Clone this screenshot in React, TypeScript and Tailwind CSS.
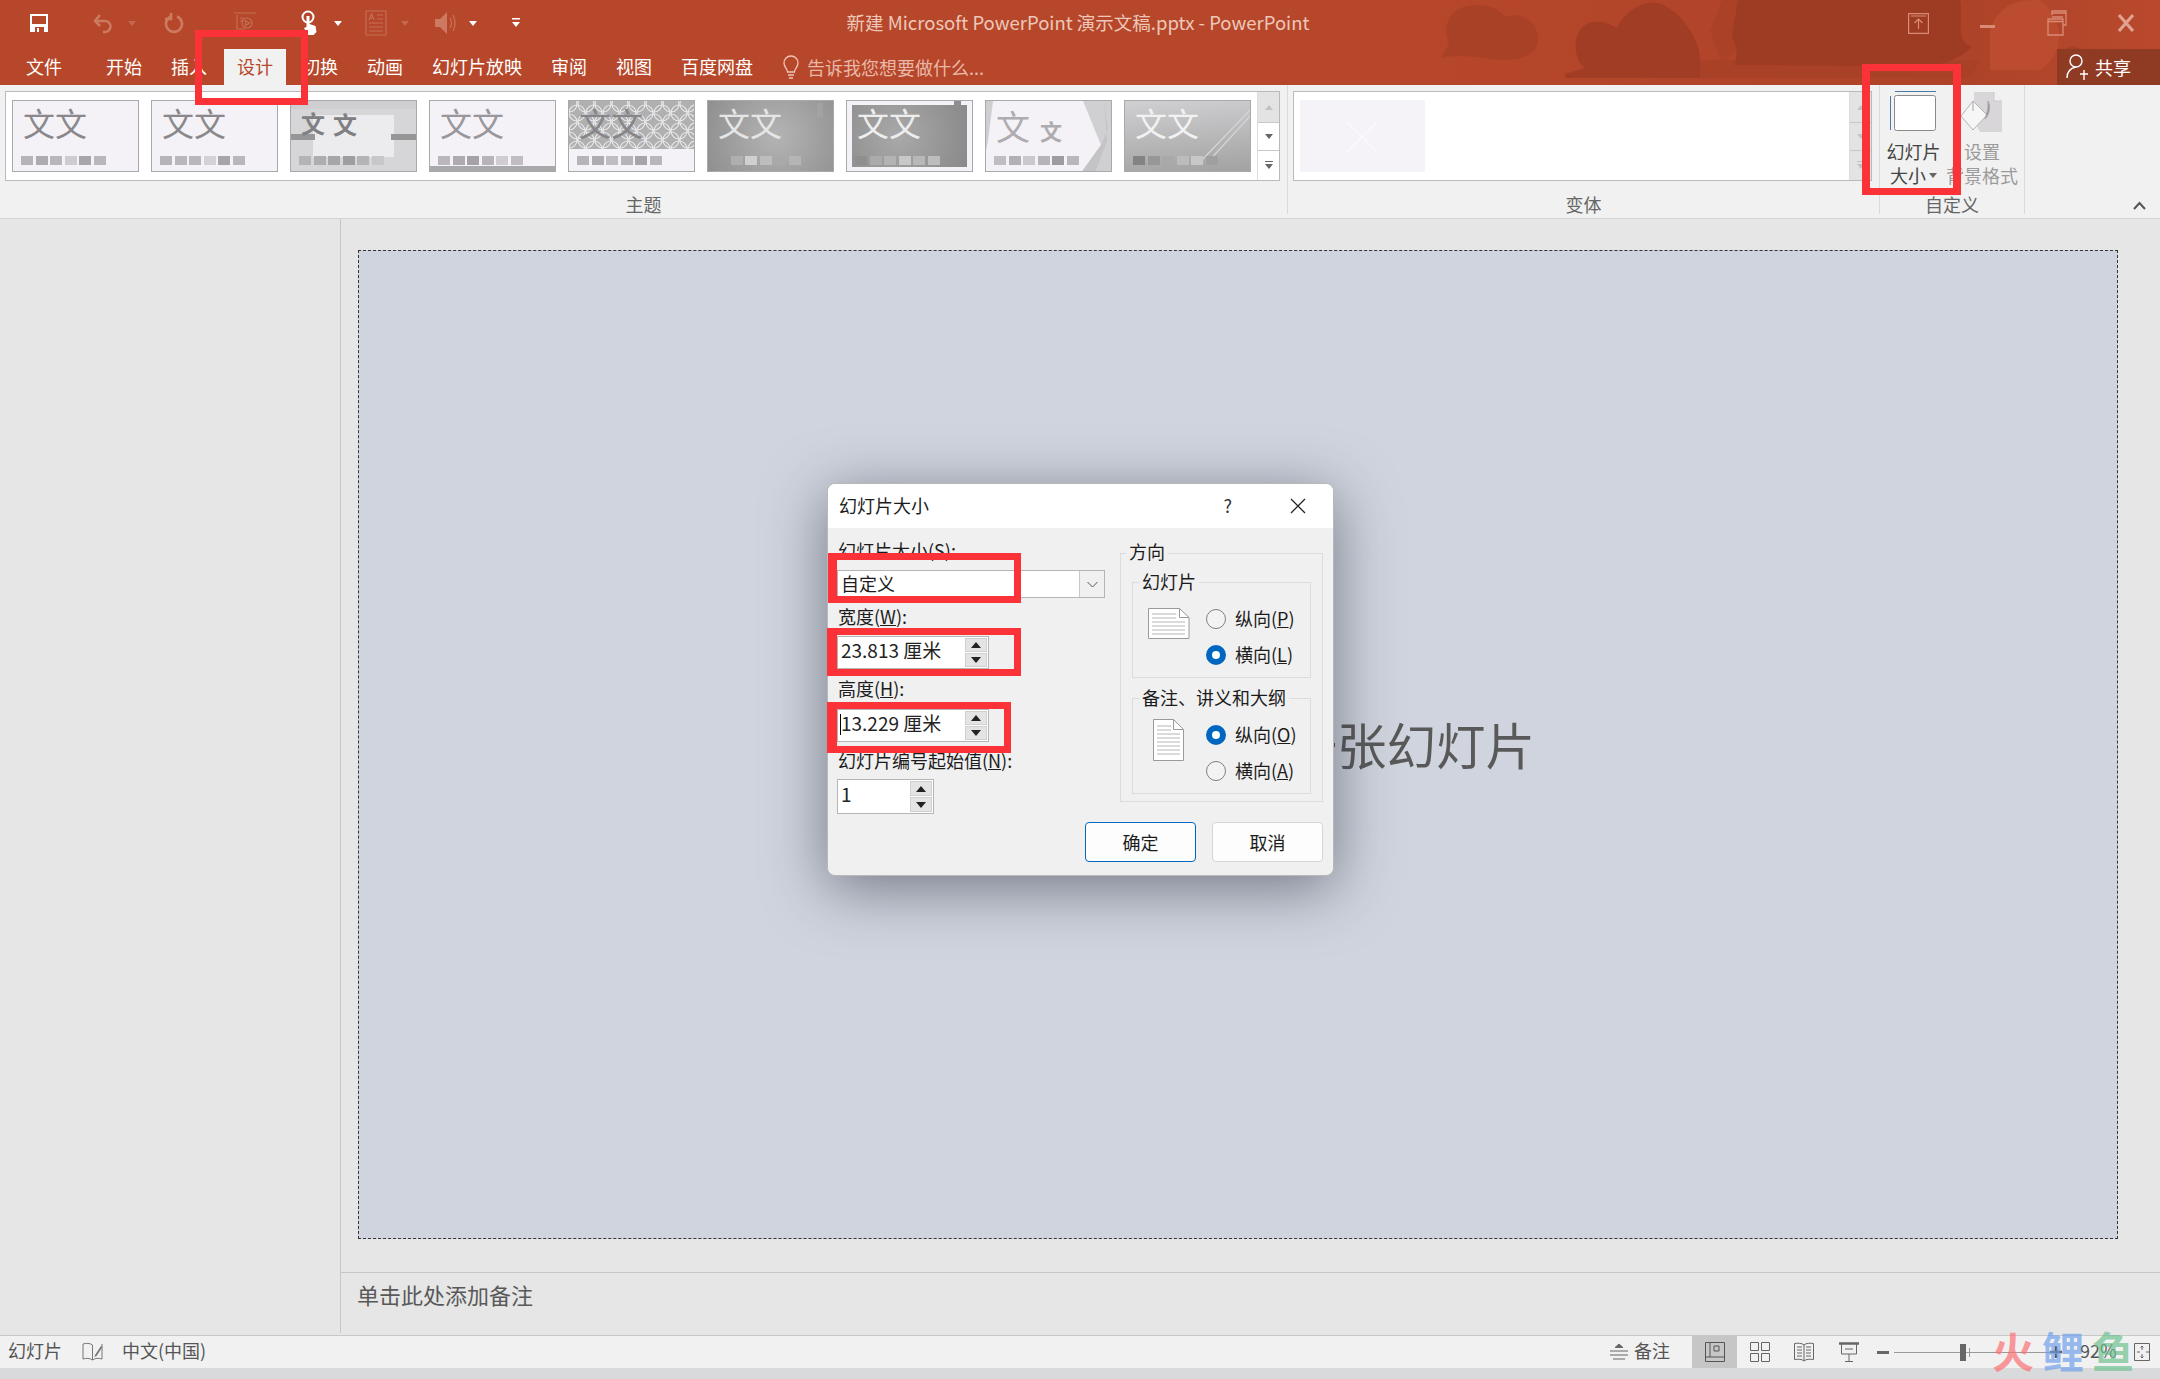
import React from "react";

const Caret = ({ c = "#f4d9d0" }: { c?: string }) => (
  <svg width="8" height="5" viewBox="0 0 8 5"><path d="M0 0h8L4 5z" fill={c} /></svg>
);

const QuickBar = () => (
  <div className="flex items-center w-[640px] shrink-0 pl-[29px]">
    <svg width="20" height="20" viewBox="0 0 20 20" className="shrink-0">
      <path d="M1 1h18v18H1z" fill="#fff" />
      <path d="M3 3h14v8H3z" fill="#b7472a" />
      <path d="M6 14h9v5H6z" fill="#b7472a" />
      <path d="M8 15h2v4H8z" fill="#fff" />
    </svg>
    <svg width="22" height="22" viewBox="0 0 22 22" className="ml-[43px] shrink-0" fill="none" stroke="#cc7a62" strokeWidth="2.6">
      <path d="M3 9h10a5.500 5.500 0 0 1 0 11h-2M8 3 3 9l5 5" />
    </svg>
    <div className="ml-[14px]"><Caret c="#c4694f" /></div>
    <svg width="20" height="22" viewBox="0 0 20 22" className="ml-[28px] shrink-0" fill="none" stroke="#cc7a62" strokeWidth="2.6">
      <path d="M7 4.500a8 8 0 1 0 6 0M7 1v6H1" />
    </svg>
    <svg width="24" height="24" viewBox="0 0 24 24" className="ml-[49px] shrink-0" fill="none" stroke="#c56e56" strokeWidth="1.200">
      <path d="M1 2h22M4 4v14h8" />
      <circle cx="14" cy="12" r="5" />
      <path d="M12.500 9.500v5l4-2.500z" />
      <path d="M7 7h4M7 10h3M12 20l2 2" />
    </svg>
    <svg width="20" height="26" viewBox="0 0 20 26" className="ml-[43px] shrink-0">
      <circle cx="8" cy="7" r="5.500" fill="none" stroke="#fff" strokeWidth="2" />
      <path d="M6.500 6h3v8l6 2 1 6-3 3H8l-4-7 2.500-1z" fill="#fff" />
    </svg>
    <div className="ml-[14px]"><Caret c="#fff" /></div>
    <svg width="22" height="26" viewBox="0 0 22 26" className="ml-[23px] shrink-0" fill="none" stroke="#c56e56" strokeWidth="1.200">
      <path d="M1 1h20v24H1zM4 13h14M4 17h14M4 21h14M4 10l2.500-6 2.500 6M5 8h3M12 5h6M12 9h6" />
    </svg>
    <div className="ml-[14px]"><Caret c="#c4694f" /></div>
    <svg width="22" height="24" viewBox="0 0 22 24" className="ml-[25px] shrink-0">
      <path d="M1 8h5l7-7v22l-7-7H1z" fill="#cc7a62" />
      <path d="M16 7q3 5 0 10M19 4q4 8 0 16" fill="none" stroke="#c56e56" strokeWidth="1.400" />
    </svg>
    <div className="ml-[13px]"><Caret c="#fff" /></div>
    <svg width="10" height="12" viewBox="0 0 10 12" className="ml-[34px] shrink-0">
      <path d="M1 1h8v1.500H1zM1 5h8L5 10z" fill="#fff" />
    </svg>
  </div>
);

const WindowControls = () => (
  <div className="flex w-[644px] shrink-0 justify-end h-full relative">
    <div className="w-[69px] flex items-center justify-center">
      <svg width="21" height="21" viewBox="0 0 21 21" fill="none" stroke="#d98b75" strokeWidth="1.200">
        <path d="M.6.600h19.800v19.800H.6z" /><path d="M3 3h15M10.500 16V6M6.500 10l4-4 4 4" />
      </svg>
    </div>
    <div className="w-[69px] flex items-center justify-center pt-[6px]"><div className="w-[15px] h-[3px] bg-[#d98b75]" /></div>
    <div className="w-[69px] flex items-center justify-center">
      <svg width="20" height="26" viewBox="0 0 20 26" fill="none" stroke="#d98b75" strokeWidth="1.300">
        <path d="M5 5V1h14v14h-3M1 9h15v16H1zM1 11.500h15M5 3h14M5 7h11" />
      </svg>
    </div>
    <div className="w-[69px] flex items-center justify-center">
      <svg width="16" height="18" viewBox="0 0 16 18" stroke="#e0a392" strokeWidth="3"><path d="M1 1l14 16M15 1 1 17" /></svg>
    </div>
  </div>
);

const tabs: [string, string][] = [
  ["开始", ""], ["插入", ""], ["设计", "active"], ["切换", ""], ["动画", ""], ["幻灯片放映", ""], ["审阅", ""], ["视图", ""], ["百度网盘", ""],
];

const TabRow = () => (
  <div className="flex h-[39px] items-end relative">
    <div className="flex items-end pl-[26px] h-full">
      <div className="h-[36px] leading-[34px] text-white mr-[44px]">文件</div>
      <div className="flex items-end">
        {tabs.map(([t, a]) =>
          a ? (
            <div key={t} className="h-[36px] leading-[34px] px-[13px] bg-[#f1f1f1] text-[#b7472a] ml-[-12px] mr-[16px]">{t}</div>
          ) : (
            <div key={t} className="h-[36px] leading-[34px] text-white mr-[29px] last:mr-0">{t}</div>
          )
        )}
      </div>
      <div className="h-[36px] leading-[34px] flex items-center ml-[29px] text-[#e8b9a9]">
        <svg width="18" height="24" viewBox="0 0 18 24" fill="none" stroke="#eec6b9" strokeWidth="1.300" className="mr-[7px]">
          <path d="M5.500 17c0-3-3.500-5-3.500-9a7 7 0 0 1 14 0c0 4-3.500 6-3.500 9zM6 20h6M7 23h4" />
        </svg>
        告诉我您想要做什么...
      </div>
    </div>
    <div className="ml-auto w-[103px] h-[36px] leading-[34px] bg-[#8f3a22] flex items-center pl-[9px] text-white">
      <svg width="22" height="30" viewBox="0 0 22 30" fill="none" stroke="#fff" strokeWidth="1.400" className="mr-[7px]">
        <circle cx="10" cy="9" r="6" /><path d="M1 26c0-7 4-10 9-11M14 22h8M18 18v10" />
      </svg>
      共享
    </div>
  </div>
);

type T = { id: number; bg: string; color: string; sw: string[] };
const thumbs: T[] = [
  { id: 1, bg: "bg-[#f4f2f6]", color: "text-[#8a888c]", sw: ["#b7b3b8", "#aeaaaf", "#bab6bb", "#cfcbd0", "#a8a4a9", "#bab6bb"] },
  { id: 2, bg: "bg-[#f4f2f6]", color: "text-[#8a888c]", sw: ["#b7b3b8", "#bab6bb", "#bab6bb", "#d5d1d6", "#a8a4a9", "#bab6bb"] },
  { id: 3, bg: "bg-[#d6d6d8]", color: "text-[#808082]", sw: ["#b5b3b6", "#aeacaf", "#a7a5a8", "#9f9da0", "#b5b3b6", "#c8c6c9"] },
  { id: 4, bg: "bg-[#f4f2f6]", color: "text-[#99979b]", sw: ["#bab6bb", "#aeaaaf", "#a5a1a6", "#b7b3b8", "#d0ccd1", "#c0bcc1"] },
  { id: 5, bg: "bg-[#f4f2f6]", color: "text-[#87858a]", sw: ["#b7b3b8", "#aeaaaf", "#c0bcc1", "#b7b3b8", "#a8a4a9", "#bab6bb"] },
  { id: 6, bg: "bg-[radial-gradient(circle_at_55%_50%,#b4b4b4,#8f8f8f)]", color: "text-[#e6e6e6]", sw: ["transparent", "#afafaf", "#d0d0d0", "#bdbdbd", "#a9a9a9", "#b5b5b5"] },
  { id: 7, bg: "bg-[#f4f2f6]", color: "text-[#eeeeee]", sw: ["#8f8f8f", "#ababab", "#b3b3b3", "#c8c8c8", "#b8b8b8", "#bdbdbd"] },
  { id: 8, bg: "bg-[#f5f2f7]", color: "text-[#aeacb0]", sw: ["#c0bcc1", "#b3afb4", "#cbc7cc", "#b7b3b8", "#9f9ba0", "#bab6bb"] },
  { id: 9, bg: "bg-[linear-gradient(175deg,#d0d0d2,#a2a2a3)]", color: "text-[#f2f2f2]", sw: ["#838383", "#979797", "#a9a9a9", "#bcbcbc", "#c8c8c8", "#a0a0a0"] },
];

const Decor = ({ id }: { id: number }) => {
  if (id === 3)
    return (
      <svg className="absolute inset-0" width="127" height="72" viewBox="0 0 127 72">
        <rect width="127" height="72" fill="#d6d6d8" />
        <path d="M22 14h81v42H22z" fill="#ececee" />
        <path d="M0 0h127v8H0z" fill="#cfcfd1" />
        <path d="M0 33h24v6H0zM100 33h27v6h-27z" fill="#969697" />
      </svg>
    );
  if (id === 4)
    return <div className="absolute left-0 right-0 bottom-0 h-[5px] bg-[#a9a9ab]" />;
  if (id === 5)
    return (
      <svg className="absolute inset-0" width="127" height="48" viewBox="0 0 127 48">
        <rect width="127" height="48" fill="#b0b0b1" />
        {Array.from({ length: 48 }).map((_, i) => (
          <circle key={i} cx={(i % 8) * 17 + (Math.floor(i / 8) % 2) * 8} cy={Math.floor(i / 8) * 9 + 3} r="8" fill="none" stroke="#e8e8ea" strokeWidth="1.200" />
        ))}
      </svg>
    );
  if (id === 6)
    return <div className="absolute right-[10px] top-[2px] w-[6px] h-[14px] bg-[#a2a2a2]" />;
  if (id === 7)
    return (
      <>
        <div className="absolute inset-x-[5px] top-[4px] bottom-[4px] bg-[radial-gradient(circle_at_40%_50%,#a9a9a9,#898989)]" />
        <div className="absolute right-[11px] top-0 w-[7px] h-[11px] bg-[#8e8e8e]" />
      </>
    );
  if (id === 8)
    return (
      <svg className="absolute inset-0" width="127" height="72" viewBox="0 0 127 72">
        <path d="M97 0h30v72H95l20-28z" fill="#d0d0d2" />
        <path d="M0 0h7L2 40 0 50z" fill="#cfcfd1" />
        <path d="M104 0h14l4 28-7 16-20 28h14l12-32-3-40z" fill="#c4c4c6" />
      </svg>
    );
  if (id === 9)
    return (
      <svg className="absolute inset-0" width="127" height="72" viewBox="0 0 127 72" fill="none" stroke="#d6d6d8" strokeWidth="1.200">
        <path d="M126 8 76 60M126 14 82 62" />
      </svg>
    );
  return null;
};

const Thumb = ({ t }: { t: T }) => (
  <div className={`relative w-[127px] h-[72px] shrink-0 overflow-hidden border border-[#a9a9ad] ${t.bg}`}>
    <Decor id={t.id} />
    {t.id === 3 || t.id === 8 ? (
      <div className={`absolute left-[10px] top-[3px] leading-[36px] ${t.color} flex items-center`}>
        <span className={`${t.id === 3 ? "text-[24px] font-bold mr-[8px]" : "text-[34px] mr-[10px]"}`}>文</span>
        <span className={`${t.id === 3 ? "text-[24px] font-bold mt-[2px]" : "text-[22px] font-bold mt-[8px]"}`}>文</span>
      </div>
    ) : (
      <div className={`absolute left-[10px] top-0 text-[32px] leading-[42px] ${t.color}`}>文文</div>
    )}
    <div className="absolute left-[8px] top-[55px] flex gap-[2.5px]">
      {t.sw.map((c, i) => (
        <div key={i} className="w-[12px] h-[9px]" style={{ backgroundColor: c }} />
      ))}
    </div>
  </div>
);

const ScrollCol = ({ faded }: { faded?: boolean }) => (
  <div className="w-[22px] flex flex-col border-l border-[#dcdcdc] shrink-0">
    <div className="h-[31px] bg-[#e3e3e3] flex items-center justify-center border-b border-[#c8c8c8]">
      <svg width="8" height="5" viewBox="0 0 8 5"><path d="M4 0l4 5H0z" fill="#c2c2c2" /></svg>
    </div>
    <div className={`h-[28px] flex items-center justify-center border-b border-[#c8c8c8] ${faded ? "bg-[#e3e3e3]" : "bg-white"}`}>
      <svg width="8" height="5" viewBox="0 0 8 5"><path d="M0 0h8L4 5z" fill={faded ? "#c2c2c2" : "#666"} /></svg>
    </div>
    <div className={`flex-1 flex items-center justify-center ${faded ? "bg-[#e3e3e3]" : "bg-white"}`}>
      <svg width="8" height="9" viewBox="0 0 8 9"><path d="M0 0h8v1H0zM0 3h8L4 8z" fill={faded ? "#c2c2c2" : "#666"} /></svg>
    </div>
  </div>
);

const Ribbon = () => (
  <div className="h-[134px] bg-[#f1f1f1] border-b border-[#d4d4d4] flex text-[#666]">
    <div className="w-[1288px] shrink-0 flex flex-col items-center border-r border-[#dadada] mb-[4px]">
      <div className="self-start shrink-0 ml-[5px] mt-[6px] w-[1275px] h-[90px] bg-white border border-[#b9b9bd] flex">
        <div className="flex-1 flex gap-[12px] pl-[6px] pt-[8px]">
          {thumbs.map((t) => <Thumb key={t.id} t={t} />)}
        </div>
        <ScrollCol />
      </div>
      <div className="mt-[11px] shrink-0 leading-[24px]">主题</div>
    </div>
    <div className="w-[592px] shrink-0 flex flex-col items-center border-r border-[#dadada] mb-[4px]">
      <div className="self-start shrink-0 ml-[5px] mt-[6px] w-[579px] h-[90px] bg-white border border-[#b9b9bd] flex">
        <div className="flex-1 pl-[6px] pt-[8px]">
          <div className="relative w-[125px] h-[72px] bg-[#f5f3f7]">
            <svg className="absolute inset-0" width="125" height="72" viewBox="0 0 125 72" stroke="#faf9fb" strokeWidth="1.500"><path d="M47 22l30 30M77 22 47 52" /></svg>
          </div>
        </div>
        <ScrollCol faded />
      </div>
      <div className="mt-[11px] shrink-0 leading-[24px]">变体</div>
    </div>
    <div className="w-[145px] shrink-0 flex flex-col border-r border-[#dadada] mb-[4px]">
      <div className="flex h-[107px] shrink-0 pt-[6px]">
        <div className="w-[68px] ml-[1px] flex flex-col items-center">
          <svg width="46" height="40" viewBox="0 0 46 40" fill="none" className="ml-[-2px]">
            <path d="M5 .5h41M.5 5v34" stroke="#4d79a8" strokeWidth="1" />
            <rect x="4.500" y="4.500" width="41" height="35" rx="2" fill="#fff" stroke="#8a8a8a" />
          </svg>
          <div className="leading-[24px] text-[#444] mt-[8px]">幻灯片</div>
          <div className="leading-[24px] text-[#444] flex items-center">大小<span className="ml-[3px]"><Caret c="#666" /></span></div>
        </div>
        <div className="flex-1 flex flex-col items-center text-[#9b9b9b] whitespace-nowrap pr-[6px]">
          <svg width="44" height="42" viewBox="0 0 44 42" fill="none">
            <path d="M14 1h20l8 9v31H20L14 30z" fill="#d9d6da" />
            <path d="M34 1v9h8" fill="#f1f1f1" stroke="#c9c9c9" />
            <path d="M13 10 1 25l12 14 14-15z" fill="#f6f6f6" stroke="#b3b3b3" />
            <path d="M13 10v10M28 10c3 6 1 14-3 18l3-10z" stroke="#a5a5a5" fill="#8f8f8f" />
          </svg>
          <div className="leading-[24px] mt-[6px]">设置</div>
          <div className="leading-[24px]">背景格式</div>
        </div>
      </div>
      <div className="text-center shrink-0 leading-[24px] text-[#666]">自定义</div>
    </div>
    <div className="flex-1 flex items-end justify-end pr-[14px] pb-[8px]">
      <svg width="13" height="9" viewBox="0 0 13 9" fill="none" stroke="#555" strokeWidth="2"><path d="M1 8l5.500-6L12 8" /></svg>
    </div>
  </div>
);

const Spin = () => (
  <div className="w-[24px] shrink-0 flex flex-col gap-[1px] p-px">
    <div className="flex-1 bg-[#e4e4e4] border border-[#d0d0d0] flex items-center justify-center">
      <svg width="10" height="6" viewBox="0 0 10 6"><path d="M5 0l5 6H0z" fill="#222" /></svg>
    </div>
    <div className="flex-1 bg-[#e4e4e4] border border-[#d0d0d0] flex items-center justify-center">
      <svg width="10" height="6" viewBox="0 0 10 6"><path d="M0 0h10L5 6z" fill="#222" /></svg>
    </div>
  </div>
);

const NumberBox = ({ value, w, h, cursor }: { value: string; w: string; h: string; cursor?: boolean }) => (
  <div className={`${w} ${h} bg-white border border-[#b5b5b5] flex`}>
    <div className="flex-1 relative text-[19px] flex items-center pl-[3px] pb-[5px] text-[#222]">
      {cursor && <div className="absolute left-[2px] top-[4px] bottom-[6px] w-px bg-black" />}
      {value}
    </div>
    <Spin />
  </div>
);

const DocIcon = ({ wide }: { wide?: boolean }) =>
  wide ? (
    <svg width="42" height="31" viewBox="0 0 42 31" fill="#fff" stroke="#9a9a9a">
      <path d="M.5.500h31l9.500 9v21H.5z" /><path d="M31.500.5v9h9.500" fill="none" />
      <path d="M4 6h24M4 10h24M4 14h33M4 18h33M4 22h33M4 26h33" stroke="#b5b5b5" fill="none" />
    </svg>
  ) : (
    <svg width="31" height="42" viewBox="0 0 31 42" fill="#fff" stroke="#9a9a9a">
      <path d="M.5.500h20l10 10v31H.5z" /><path d="M20.500.5v10h10" fill="none" />
      <path d="M4 7h14M4 11h14M4 15h23M4 19h23M4 23h23M4 27h23M4 31h23M4 35h23" stroke="#b5b5b5" fill="none" />
    </svg>
  );

const Radio = ({ on, label, k }: { on?: boolean; label: string; k: string }) => (
  <div className="flex items-center h-[36px] whitespace-nowrap">
    <div className={`w-[20px] h-[20px] rounded-full shrink-0 mr-[9px] ${on ? "border-[6px] border-[#0067c0] bg-white" : "border border-[#7f7f7f] bg-[#f3f3f3]"}`} />
    <span className="pb-[1px]">{label}(<u>{k}</u>)</span>
  </div>
);

const OptionBox = ({ title, children, icon }: { title: string; children: React.ReactNode; icon: React.ReactNode }) => (
  <div className="relative w-[179px] h-[96px] border border-[#dcdcdc] flex">
    <span className="absolute left-[6px] top-[-14px] px-[3px] bg-[#f0f0f0] leading-[24px]">{title}</span>
    <div className="w-[73px] shrink-0">{icon}</div>
    <div className="pt-[18px]">{children}</div>
  </div>
);

const Dialog = () => (
  <div className="absolute left-[827px] top-[483px] w-[507px] h-[393px] rounded-[8px] bg-[#f0f0f0] shadow-[0_12px_60px_rgba(40,45,60,0.55)] border border-[#b8b8b8] overflow-hidden text-[#1c1c1c] text-[18px] z-10">
    <div className="h-[44px] bg-white flex items-center pl-[11px]">
      <span className="pb-[2px]">幻灯片大小</span>
      <span className="ml-auto mr-[58px] text-[#333] pb-[2px]">?</span>
      <svg width="16" height="16" viewBox="0 0 16 16" stroke="#222" strokeWidth="1.300" className="mr-[27px]"><path d="M1 1l14 14M15 1 1 15" /></svg>
    </div>
    <div className="flex h-[286px]">
      <div className="w-[292px] shrink-0 pl-[9px]">
        <div className="mt-[10px] ml-px leading-[24px]">幻灯片大小(<u>S</u>):</div>
        <div className="mt-[8px] w-[268px] h-[28px] bg-white border border-[#b5b5b5] flex items-center pl-[3px]">
          <span className="pb-[2px]">自定义</span>
          <div className="ml-auto w-[25px] h-full bg-[#f0f0f0] border-l border-[#c8c8c8] flex items-center justify-center">
            <svg width="11" height="7" viewBox="0 0 11 7" fill="none" stroke="#555"><path d="M.5 1l5 5 5-5" /></svg>
          </div>
        </div>
        <div className="mt-[6px] ml-px leading-[24px]">宽度(<u>W</u>):</div>
        <div className="mt-[8px]"><NumberBox value="23.813 厘米" w="w-[152px]" h="h-[33px]" /></div>
        <div className="mt-[7px] ml-px leading-[24px]">高度(<u>H</u>):</div>
        <div className="mt-[9px]"><NumberBox value="13.229 厘米" w="w-[152px]" h="h-[33px]" cursor /></div>
        <div className="mt-[6px] ml-px leading-[24px]">幻灯片编号起始值(<u>N</u>):</div>
        <div className="mt-[7px]"><NumberBox value="1" w="w-[97px]" h="h-[35px]" /></div>
      </div>
      <div className="relative mt-[25px] w-[203px] h-[249px] border border-[#dcdcdc] px-[11px] pt-[28px]">
        <span className="absolute left-[5px] top-[-15px] px-[3px] bg-[#f0f0f0] leading-[24px]">方向</span>
        <OptionBox title="幻灯片" icon={<div className="pl-[15px] pt-[25px]"><DocIcon wide /></div>}>
          <Radio label="纵向" k="P" />
          <Radio on label="横向" k="L" />
        </OptionBox>
        <div className="mt-[20px]">
          <OptionBox title="备注、讲义和大纲" icon={<div className="pl-[20px] pt-[20px]"><DocIcon /></div>}>
            <Radio on label="纵向" k="O" />
            <Radio label="横向" k="A" />
          </OptionBox>
        </div>
      </div>
    </div>
    <div className="flex justify-end gap-[16px] pr-[10px] mt-[8px]">
      <div className="w-[111px] h-[40px] bg-[#fdfdfd] border-[1.5px] border-[#0067c0] rounded-[4px] flex items-center justify-center">确定</div>
      <div className="w-[111px] h-[40px] bg-[#fdfdfd] border border-[#d5d5d5] rounded-[4px] flex items-center justify-center">取消</div>
    </div>
  </div>
);

const RedBox = ({ cls }: { cls: string }) => (
  <div className={`absolute border-[#fb3339] z-20 ${cls}`} />
);

const StatusBar = () => (
  <div className="h-[33px] bg-[#f1f1f1] border-t border-[#c8c8c8] flex items-center text-[#555] relative">
    <span className="ml-[8px] pb-[4px]">幻灯片</span>
    <svg width="21" height="22" viewBox="0 0 21 22" fill="none" stroke="#777" className="ml-[20px]">
      <path d="M10.500 4C8 2 4 2 1 3v15c3-1 7-1 9.500 1 2.500-2 6-2 9.500-1V3M10.500 4v15" />
      <path d="M13 14l6-9 1.500 1-6 9-2 1z" fill="#777" stroke="none" />
    </svg>
    <span className="ml-[19px] pb-[4px]">中文(中国)</span>
    <div className="ml-auto flex items-center h-full pr-[10px]">
      <svg width="18" height="18" viewBox="0 0 18 18" className="mr-[6px]" fill="none" stroke="#666">
        <path d="M5 4.500 9 1l4 3.500z" fill="#666" /><path d="M0 8h18M0 12h18M3 16h12" />
      </svg>
      <span className="mr-[22px] pb-[4px]">备注</span>
      <div className="w-[45px] h-full bg-[#c6c6c6] flex items-center justify-center">
        <svg width="20" height="20" viewBox="0 0 20 20" fill="none" stroke="#555"><path d="M.5.500h19v19H.5zM.5 15H19M5 .5V15M9 4h5v5H9z" /></svg>
      </div>
      <div className="w-[45px] flex items-center justify-center">
        <svg width="20" height="20" viewBox="0 0 20 20" fill="none" stroke="#666"><path d="M.5.500h8v8h-8zM11.500.5h8v8h-8zM.5 11.500h8v8h-8zM11.500 11.500h8v8h-8z" /></svg>
      </div>
      <div className="w-[44px] flex items-center justify-center">
        <svg width="20" height="20" viewBox="0 0 20 20" fill="none" stroke="#666"><path d="M10 3C8 1 4 1 .5 1.500v16C4 17 8 17 10 19c2-2 6-2 9.500-1.500v-16C16 1 12 1 10 3zM10 3v16M3 5h5M3 8h5M3 11h5M3 14h5M12 5h5M12 8h5M12 11h5M12 14h5" /></svg>
      </div>
      <div className="w-[46px] flex items-center justify-center">
        <svg width="20" height="20" viewBox="0 0 20 20" fill="none" stroke="#666"><path d="M0 1.500h20" strokeWidth="2.500" /><path d="M2.500 2v10h15V2M10 12v7M6 19.500h8M6 7h8" /></svg>
      </div>
      <div className="w-[12px] h-[3px] bg-[#666] ml-[5px]" />
      <div className="relative w-[156px] h-[1px] bg-[#9a9a9a] ml-[5px]">
        <div className="absolute left-[66px] top-[-8px] w-[6px] h-[17px] bg-[#666]" />
        <div className="absolute left-[75px] top-[-4px] w-px h-[9px] bg-[#9a9a9a]" />
      </div>
      <svg width="12" height="12" viewBox="0 0 12 12" stroke="#555" strokeWidth="2.500"><path d="M0 6h12M6 0v12" /></svg>
      <span className="ml-[18px] w-[54px] pb-[4px]">92%</span>
      <svg width="16" height="18" viewBox="0 0 16 18" fill="none" stroke="#666"><path d="M.5.500h15v17H.5zM8 3v4M6.500 4.500 8 3l1.500 1.500M8 11v4M6.500 13.500 8 15l1.500-1.500M3 9h3M12 9h3" /></svg>
    </div>
  </div>
);

export default function App() {
  return (
    <div className="relative w-[2160px] h-[1379px] overflow-hidden flex flex-col bg-[#e6e6e6] text-[18px] font-['Noto_Sans_CJK_SC','Noto_Sans',sans-serif]">
      <div className="relative bg-[#b7472a] h-[85px] shrink-0 overflow-hidden">
        <svg className="absolute right-0 top-0" width="760" height="85" viewBox="0 0 760 85">
          <defs>
            <linearGradient id="fade" x1="0" x2="1" y1="0" y2="0">
              <stop offset="0" stopColor="#b7472a" />
              <stop offset=".15" stopColor="#b5462a" />
              <stop offset=".75" stopColor="#ad4328" />
              <stop offset="1" stopColor="#b9492d" />
            </linearGradient>
          </defs>
          <rect width="760" height="85" fill="url(#fade)" />
          <path d="M41 58l8-14C40 20 55 4 78 5c14 0 22 6 28 12 14-6 32 4 32 22 0 14-14 20-30 21-20 1-38-8-67-2z" fill="#a94127" />
          <path d="M165 78v-4l20-6c-12-8-14-36 2-44 12-6 22 0 30 4 8-18 30-30 44-24 20 8 39 36 39 54l1 10 20 10z" fill="#a03d24" />
          <path d="M300 78V60h280l-10 18z" fill="#a94127" />
          <path d="M310 30 322 0h24l-10 50-14 14z" fill="#ab4227" />
          <path d="M334 65c6-14 0-22-2-30L338 0h222c4 18-6 44 12 46-10 12-30 20-50 20z" fill="#9e3b23" />
          <path d="M590 30c10-28 30-30 50-30 20 14 30 50 0 70h-50z" fill="#bb4c30" />
          <path d="M660 60c2-12 14-22 26-4l8 10h-34z" fill="#a43f25" />
        </svg>
        <div className="relative flex h-[46px] items-center">
          <QuickBar />
          <div className="flex-1 text-center text-[18.5px] text-[#edc7ba] whitespace-nowrap">新建 Microsoft PowerPoint 演示文稿.pptx - PowerPoint</div>
          <WindowControls />
        </div>
        <TabRow />
      </div>
      <Ribbon />
      <div className="flex-1 flex min-h-0">
        <div className="w-[341px] shrink-0 border-r border-[#c6c6c6] mb-[2px]" />
        <div className="flex-1 flex flex-col min-w-0">
          <div className="flex-1 pt-[31px] pb-[33px] pl-[17px] pr-[42px] min-h-0">
            <div className="h-full bg-[#cfd4de] border border-dashed border-[#333] flex items-center justify-center text-[49.5px] text-[#595959]">
              单击此处添加第一张幻灯片
            </div>
          </div>
          <div className="h-[63px] shrink-0 border-t border-[#c6c6c6] pl-[16px] pt-[5px] text-[22px] leading-[32px] text-[#595959]">单击此处添加备注</div>
        </div>
      </div>
      <StatusBar />
      <div className="h-[11px] shrink-0 bg-[#d9dadb]" />

      <Dialog />
      <RedBox cls="left-[195px] top-[30px] w-[113px] h-[75px] border-[7px]" />
      <RedBox cls="left-[1862px] top-[64px] w-[99px] h-[131px] border-[7px] border-x-[8px]" />
      <RedBox cls="left-[828px] top-[553px] w-[193px] h-[50px] border-[7px] border-l-[9px]" />
      <RedBox cls="left-[827px] top-[628px] w-[194px] h-[48px] border-[7px] border-l-[10px]" />
      <RedBox cls="left-[827px] top-[702px] w-[184px] h-[51px] border-[7px] border-l-[10px]" />

      <div className="absolute left-[1992px] top-[1331px] h-[40px] flex gap-[8px] text-[42px] leading-[38px] font-bold z-20 whitespace-nowrap">
        <span className="text-[#fb6f72]/70">火</span>
        <span className="text-[#6f9fec]/70">鲤</span>
        <span className="text-[#6cc08e]/70">鱼</span>
      </div>
    </div>
  );
}
